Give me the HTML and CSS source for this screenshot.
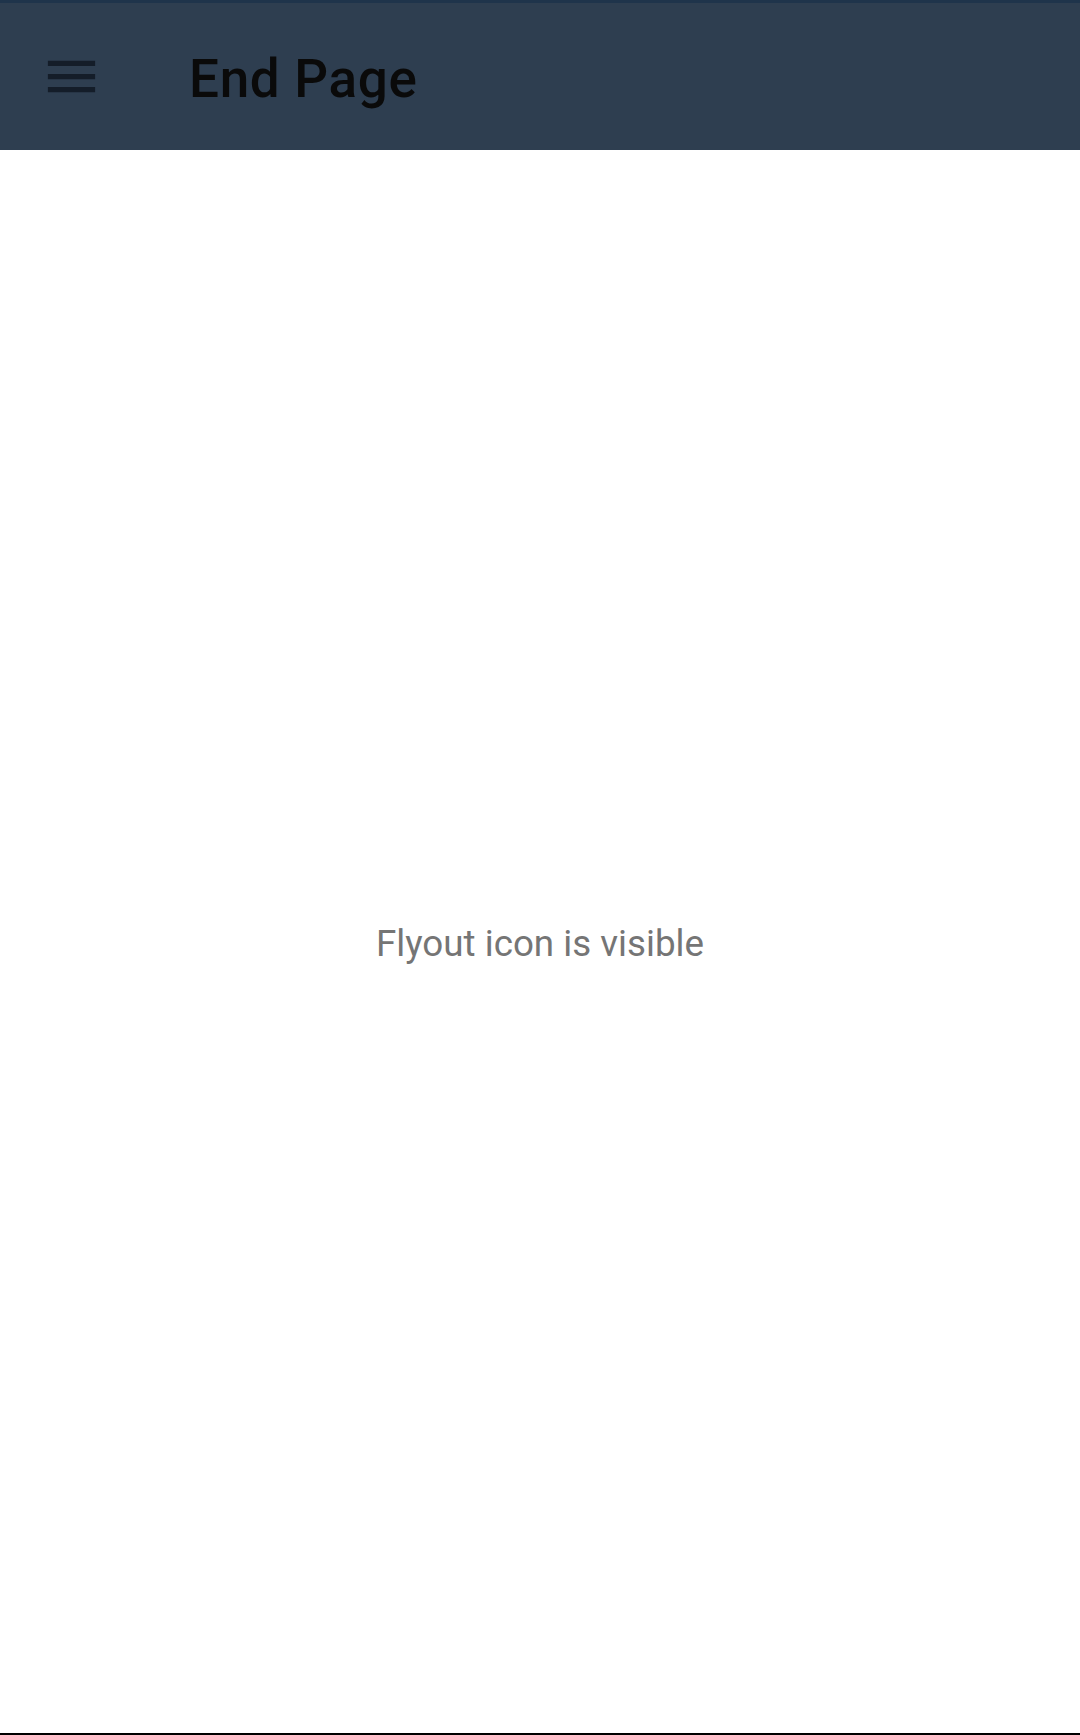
FILE: index.html
```html
<!DOCTYPE html>
<html lang="en">
<head>
<meta charset="utf-8">
<title>End Page</title>
<link rel="stylesheet" href="styles.css">
</head>
<body>
<div class="app">
  <div class="status-strip"></div>
  <header class="toolbar">
    <button class="menu-btn" aria-label="Open navigation">
      <svg class="menu-icon" viewBox="0 0 24 24" width="63" height="63" aria-hidden="true">
        <path d="M3 18h18v-2H3v2zm0-5h18v-2H3v2zm0-7v2h18V6H3z"/>
      </svg>
    </button>
    <h1 class="title">End Page</h1>
  </header>
  <main class="content">
    <p class="message">Flyout icon is visible</p>
  </main>
</div>
</body>
</html>
```

FILE: styles.css
```css
html, body {
  margin: 0;
  padding: 0;
  background: #ffffff;
}

.app {
  width: 1080px;
  height: 1735px;
  display: flex;
  flex-direction: column;
  box-sizing: border-box;
  border-bottom: 2px solid #000000;
  font-family: Roboto, "Noto Sans", sans-serif;
}

.status-strip {
  height: 3px;
  background: #1f344b;
  flex: 0 0 auto;
}

.toolbar {
  height: 147px;
  flex: 0 0 auto;
  background: #2e3e50;
  display: flex;
  align-items: center;
  padding-left: 40px;
  box-sizing: border-box;
}

.menu-btn {
  width: 63px;
  height: 63px;
  padding: 0;
  margin: 0;
  border: 0;
  background: transparent;
  display: flex;
  align-items: center;
  justify-content: center;
}

.menu-icon {
  display: block;
  fill: #141d29;
}

.title {
  margin: 6px 0 0 86px;
  font-size: 53px;
  font-weight: 500;
  letter-spacing: 0.7px;
  color: #0a0a0a;
  line-height: 1;
}

.content {
  flex: 1 1 auto;
  display: flex;
  align-items: center;
  justify-content: center;
  padding-top: 6px;
}

.message {
  margin: 0;
  font-size: 36.75px;
  font-weight: 400;
  color: #757575;
  line-height: 1.2;
}
```
